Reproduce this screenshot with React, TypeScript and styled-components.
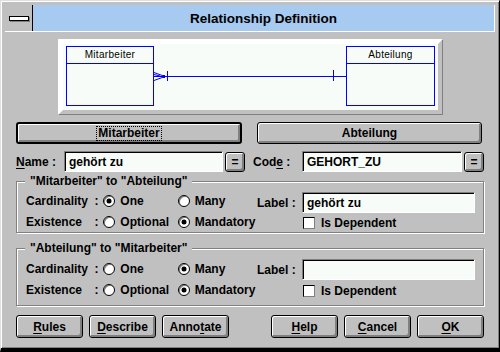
import React from 'react';
import styled, { createGlobalStyle } from 'styled-components';

const Global = createGlobalStyle`
  html, body { margin: 0; padding: 0; background: #c0c0c0; }
  body { font-family: "Liberation Sans", Arial, sans-serif; }
  * { box-sizing: border-box; }
`;

const FONT = `"Liberation Sans", Arial, sans-serif`;

const Window = styled.div`
  width: 500px;
  height: 352px;
  background: #c0c0c0;
  border-style: solid;
  border-width: 1px 1px 4px 1px;
  border-color: #dfdfdf #000 #000 #dfdfdf;
  box-shadow: inset 1px 1px 0 #fff, inset -1px -1px 0 #808080;
  padding: 4px 4px 0 4px;
  display: flex;
  flex-direction: column;
  font-family: ${FONT};
  color: #000;
`;

const TitleBar = styled.div`
  display: flex;
  height: 27px;
  border-bottom: 1px solid #fff;
`;

const SysMenu = styled.div`
  width: 28px;
  border-right: 1px solid #000;
  display: flex;
  align-items: center;
  justify-content: center;
  background: #c0c0c0;
`;

const SysBar = styled.span`
  width: 20px;
  height: 5px;
  background: #fff;
  border: 1px solid #000;
  box-shadow: 1px 1px 0 #808080;
`;

const Caption = styled.div`
  flex: 1;
  background: #a6caf0;
  border-right: 1px solid #fff;
  display: flex;
  align-items: center;
  justify-content: center;
  font-weight: bold;
  font-size: 13.5px;
`;

const Body = styled.div`
  display: flex;
  flex-direction: column;
  padding: 0 11px;
`;

const DiagramPanel = styled.div`
  align-self: center;
  width: 385px;
  height: 76px;
  margin-top: 7px;
  border: 1px solid;
  border-color: #fff #808080 #808080 #fff;
  display: flex;
`;

const DiagramInner = styled.div`
  flex: 1;
  border: 4px solid;
  border-color: #fff #c0c0c0 #c0c0c0 #fff;
  background: #f8fcf8;
  display: flex;
`;

const ButtonRow = styled.div<{ $top: number }>`
  display: flex;
  justify-content: space-between;
  align-items: center;
  margin-top: ${p => p.$top}px;
`;

const BtnGroup = styled.div`
  display: flex;
  gap: 6px;
`;

const PushButton = styled.button<{ $w: number; $h: number; $default?: boolean; $mr?: number }>`
  width: ${p => p.$w}px;
  height: ${p => p.$h}px;
  padding: 0;
  margin: 0 ${p => p.$mr ?? 0}px 0 0;
  font-family: ${FONT};
  font-weight: bold;
  font-size: 12px;
  color: #000;
  background: #c0c0c0;
  border: ${p => (p.$default ? 2 : 1)}px solid #000;
  border-radius: 3px;
  box-shadow: inset 1px 1px 0 #fff, inset -2px -2px 0 #808080;
  display: flex;
  align-items: center;
  justify-content: center;
  u { text-decoration-thickness: 1px; text-underline-offset: 2px; }
`;

const FocusText = styled.span`
  border: 1px dotted #000;
  padding: 0 1px;
  line-height: 13px;
`;

const FieldRow = styled.div`
  display: flex;
  align-items: center;
  height: 21px;
  margin-top: 7px;
`;

const FieldLabel = styled.label<{ $w: number }>`
  width: ${p => p.$w}px;
  font-weight: bold;
  font-size: 12px;
  white-space: pre;
  u { text-underline-offset: 2px; }
`;

const TextBox = styled.input<{ $w: number }>`
  width: ${p => p.$w}px;
  height: 21px;
  margin: 0;
  padding: 0 0 0 4px;
  background: #f8fcf8;
  border: 1px solid;
  border-color: #808080 #fff #fff #808080;
  box-shadow: inset 1px 1px 0 #000;
  font-family: ${FONT};
  font-weight: bold;
  font-size: 12px;
  color: #000;
  outline: none;
`;

const Gap = styled.span<{ $w: number }>`
  display: inline-block;
  width: ${p => p.$w}px;
  flex: none;
`;

const Group = styled.div<{ $h: number; $top: number }>`
  position: relative;
  height: ${p => p.$h}px;
  margin-top: ${p => p.$top}px;
  width: 468px;
  border: 1px solid #808080;
  box-shadow: inset 1px 1px 0 #fff, 1px 1px 0 #fff;
  display: flex;
  padding-left: 9px;
`;

const GroupTitle = styled.span`
  position: absolute;
  left: 8px;
  top: -8px;
  padding: 0 5px;
  background: #c0c0c0;
  font-weight: bold;
  font-size: 12px;
  line-height: 14px;
`;

const LeftCol = styled.div`
  width: 231px;
  padding-top: 9px;
  display: flex;
  flex-direction: column;
`;

const RightCol = styled.div`
  flex: 1;
  padding-top: 10px;
  display: flex;
  flex-direction: column;
`;

const OptRow = styled.div`
  display: flex;
  align-items: center;
  height: 21px;
  font-weight: bold;
  font-size: 12px;
`;

const RowLabel = styled.span`
  width: 69px;
`;

const Colon = styled.span`
  width: 9px;
`;

const Option = styled.span<{ $w: number }>`
  width: ${p => p.$w}px;
  display: flex;
  align-items: center;
  gap: 5px;
`;

const Radio = styled.span<{ $on?: boolean }>`
  width: 12px;
  height: 12px;
  border-radius: 50%;
  background: #fff;
  border: 1px solid #000;
  box-shadow: inset 1px 1px 0 #808080;
  display: flex;
  align-items: center;
  justify-content: center;
  flex: none;
  &::after {
    content: '';
    display: ${p => (p.$on ? 'block' : 'none')};
    width: 4px;
    height: 4px;
    border-radius: 50%;
    background: #000;
    box-shadow: 0 0 0 0.5px #000;
  }
`;

const LabelCell = styled.span`
  width: 45px;
`;

const CheckRow = styled.div`
  display: flex;
  align-items: center;
  height: 21px;
  padding-left: 46px;
  gap: 6px;
  font-weight: bold;
  font-size: 12px;
`;

const CheckBox = styled.span`
  width: 12px;
  height: 12px;
  background: #fff;
  border: 1px solid;
  border-color: #000 #808080 #808080 #000;
  flex: none;
`;

type GroupProps = {
  title: string;
  h: number;
  top: number;
  one: boolean;
  mandatory: boolean;
  label: string;
};

function RelGroup({ title, h, top, one, mandatory, label }: GroupProps) {
  return (
    <Group $h={h} $top={top}>
      <GroupTitle>{title}</GroupTitle>
      <LeftCol>
        <OptRow>
          <RowLabel>Cardinality</RowLabel>
          <Colon>:</Colon>
          <Option $w={75}><Radio $on={one} />One</Option>
          <Option $w={80}><Radio $on={!one} />Many</Option>
        </OptRow>
        <OptRow>
          <RowLabel>Existence</RowLabel>
          <Colon>:</Colon>
          <Option $w={75}><Radio $on={!mandatory} />Optional</Option>
          <Option $w={80}><Radio $on={mandatory} />Mandatory</Option>
        </OptRow>
      </LeftCol>
      <RightCol>
        <OptRow>
          <LabelCell>Label :</LabelCell>
          <TextBox $w={173} readOnly value={label} />
        </OptRow>
        <CheckRow>
          <CheckBox />
          Is Dependent
        </CheckRow>
      </RightCol>
    </Group>
  );
}

function Diagram() {
  const blue = '#0000ff';
  return (
    <svg width="375" height="66" viewBox="63 44 375 66" style={{ display: 'block' }}>
      <g fill="none" stroke={blue} strokeWidth="1" shapeRendering="crispEdges">
        <rect x="66.5" y="46.5" width="87" height="59" />
        <path d="M66.5 63.5H153.5" />
        <rect x="346.5" y="46.5" width="88" height="59" />
        <path d="M346.5 63.5H434.5" />
        <path d="M154 76.5H346" />
        <path d="M167.5 71V81" />
        <path d="M333.5 70V81" />
      </g>
      <g fill="none" stroke={blue} strokeWidth="1">
        <path d="M154 72.5L165 76.5M154 80.5L165 76.5M154 74.5L160 76" />
      </g>
      <rect x="163" y="75" width="2" height="3" fill={blue} />
      <g fontFamily={FONT} fontSize="10" fill="#000" textAnchor="middle" letterSpacing="0.3">
        <text x="110" y="58">Mitarbeiter</text>
        <text x="390.5" y="58">Abteilung</text>
      </g>
    </svg>
  );
}

export default function App() {
  return (
    <>
      <Global />
      <Window>
        <TitleBar>
          <SysMenu><SysBar /></SysMenu>
          <Caption>Relationship Definition</Caption>
        </TitleBar>
        <Body>
          <DiagramPanel>
            <DiagramInner>
              <Diagram />
            </DiagramInner>
          </DiagramPanel>

          <ButtonRow $top={7}>
            <PushButton $w={226} $h={22} $default>
              <FocusText>Mitarbeiter</FocusText>
            </PushButton>
            <PushButton $w={225} $h={22} $mr={2}>Abteilung</PushButton>
          </ButtonRow>

          <FieldRow>
            <FieldLabel $w={48}><u>N</u>ame :</FieldLabel>
            <TextBox $w={159} readOnly value="gehört zu" />
            <Gap $w={2} />
            <PushButton $w={20} $h={20}>=</PushButton>
            <Gap $w={8} />
            <FieldLabel $w={49}>Cod<u>e</u> :</FieldLabel>
            <TextBox $w={160} readOnly value="GEHORT_ZU" />
            <Gap $w={2} />
            <PushButton $w={20} $h={20}>=</PushButton>
          </FieldRow>

          <RelGroup
            title={'"Mitarbeiter" to "Abteilung"'}
            h={52}
            top={9}
            one={true}
            mandatory={true}
            label="gehört zu"
          />
          <RelGroup
            title={'"Abteilung" to "Mitarbeiter"'}
            h={58}
            top={15}
            one={false}
            mandatory={true}
            label=""
          />

          <ButtonRow $top={9}>
            <BtnGroup>
              <PushButton $w={67} $h={23}><u>R</u>ules</PushButton>
              <PushButton $w={67} $h={23}><u>D</u>escribe</PushButton>
              <PushButton $w={67} $h={23}>Anno<u>t</u>ate</PushButton>
            </BtnGroup>
            <BtnGroup>
              <PushButton $w={67} $h={23}><u>H</u>elp</PushButton>
              <PushButton $w={67} $h={23}><u>C</u>ancel</PushButton>
              <PushButton $w={67} $h={23}><u>O</u>K</PushButton>
            </BtnGroup>
          </ButtonRow>
        </Body>
      </Window>
    </>
  );
}
